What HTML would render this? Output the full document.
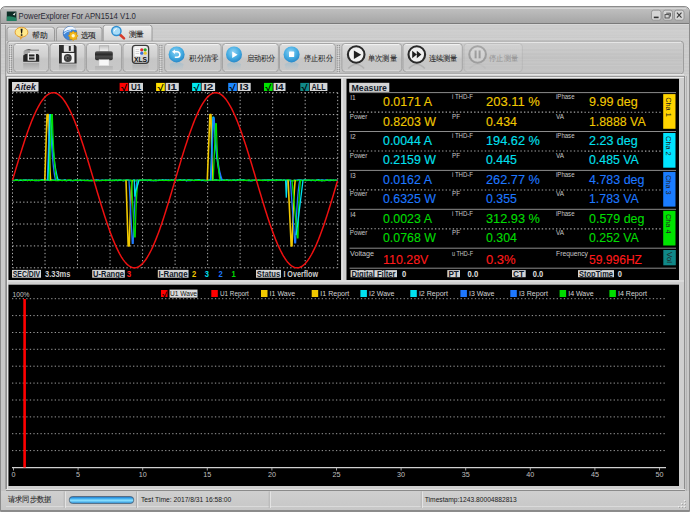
<!DOCTYPE html><html><head><meta charset="utf-8"><style>
html,body{margin:0;padding:0;background:#fff;width:690px;height:519px;overflow:hidden}
svg{display:block;font-family:"Liberation Sans", sans-serif}
</style></head><body>
<svg width="690" height="519" viewBox="0 0 690 519">
<defs>
<linearGradient id="gTitle" x1="0" y1="0" x2="0" y2="1">
<stop offset="0" stop-color="#c2c2c2"/><stop offset="1" stop-color="#a6a6a6"/></linearGradient>
<linearGradient id="gMetal" x1="0" y1="0" x2="0" y2="1">
<stop offset="0" stop-color="#d2d2d2"/><stop offset="1" stop-color="#c4c4c4"/></linearGradient>
<linearGradient id="gTool" x1="0" y1="0" x2="0" y2="1">
<stop offset="0" stop-color="#cfcfcf"/><stop offset="0.5" stop-color="#c4c4c4"/><stop offset="1" stop-color="#c9c9c9"/></linearGradient>
<linearGradient id="gBtn" x1="0" y1="0" x2="0" y2="1">
<stop offset="0" stop-color="#dedede"/><stop offset="0.45" stop-color="#d0d0d0"/><stop offset="0.55" stop-color="#c6c6c6"/><stop offset="1" stop-color="#c8c8c8"/></linearGradient>
<linearGradient id="gTab" x1="0" y1="0" x2="0" y2="1">
<stop offset="0" stop-color="#dcdcdc"/><stop offset="1" stop-color="#c2c2c2"/></linearGradient>
<linearGradient id="gTabA" x1="0" y1="0" x2="0" y2="1">
<stop offset="0" stop-color="#ececec"/><stop offset="1" stop-color="#d4d4d4"/></linearGradient>
<linearGradient id="gStatus" x1="0" y1="0" x2="0" y2="1">
<stop offset="0" stop-color="#cfcfcf"/><stop offset="1" stop-color="#c6c6c6"/></linearGradient>
<linearGradient id="gProg" x1="0" y1="0" x2="0" y2="1">
<stop offset="0" stop-color="#1c7ad0"/><stop offset="0.25" stop-color="#3aa8ec"/><stop offset="0.55" stop-color="#8ae0ff"/><stop offset="1" stop-color="#2c96e0"/></linearGradient>
<radialGradient id="gBlue" cx="0.45" cy="0.35" r="0.65">
<stop offset="0" stop-color="#8ed2f4"/><stop offset="0.6" stop-color="#44ace2"/><stop offset="1" stop-color="#2888c8"/></radialGradient>
<linearGradient id="gRefl" x1="0" y1="0" x2="0" y2="1">
<stop offset="0" stop-color="#000" stop-opacity="0.16"/><stop offset="1" stop-color="#000" stop-opacity="0"/></linearGradient>
<linearGradient id="gReflB" x1="0" y1="0" x2="0" y2="1">
<stop offset="0" stop-color="#3aa6e2" stop-opacity="0.35"/><stop offset="1" stop-color="#3aa6e2" stop-opacity="0"/></linearGradient>
</defs>

<path d="M0.5,511.5 L0.5,12 Q0.5,6.5 6,6.5 L684,6.5 Q689.5,6.5 689.5,12 L689.5,511.5 Z" fill="#c6c6c6" stroke="#8c8c8c" stroke-width="1"/>
<path d="M1,23 L1,12 Q1,7 6,7 L684,7 Q689,7 689,12 L689,23 Z" fill="url(#gTitle)"/>
<line x1="4" y1="8.5" x2="686" y2="8.5" stroke="#d6d6d6" stroke-width="1"/>
<line x1="1" y1="23.5" x2="689" y2="23.5" stroke="#7a7a7a" stroke-width="1"/>
<line x1="1" y1="24.5" x2="689" y2="24.5" stroke="#d8d8d8" stroke-width="1"/>
<rect x="6.8" y="11.5" width="9.6" height="9.4" fill="#0e2d26"/><path d="M6.8,16.5 Q10.5,15.5 16.4,17.8 L16.4,20.9 L6.8,20.9Z" fill="#208060"/><path d="M12.8,14.5 L15.8,12.2 L14.5,15.5 Z" fill="#f0f0f0"/>
<text x="18.6" y="19.2" font-size="9.2" fill="#2a2a36" textLength="117.3" lengthAdjust="spacingAndGlyphs">PowerExplorer For APN1514 V1.0</text>
<rect x="651.5" y="10.2" width="9.5" height="10" rx="2.2" fill="#d6d6d6" stroke="#8a8a8a" stroke-width="0.8"/>
<rect x="663" y="10.2" width="9.5" height="10" rx="2.2" fill="#d6d6d6" stroke="#8a8a8a" stroke-width="0.8"/>
<rect x="674.5" y="10.2" width="9.5" height="10" rx="2.2" fill="#d6d6d6" stroke="#8a8a8a" stroke-width="0.8"/>
<rect x="653.8" y="16.6" width="4.8" height="1.6" fill="#333"/>
<path d="M666.2,13.2 h4.2 v3.4" fill="none" stroke="#444" stroke-width="0.9"/><rect x="665" y="14.6" width="4.2" height="3.4" fill="#d6d6d6" stroke="#444" stroke-width="0.9"/>
<path d="M676.9,12.6 L681.5,17.6 M681.5,12.6 L676.9,17.6" stroke="#3a3a3a" stroke-width="1.1"/>
<rect x="1" y="25" width="688" height="486" fill="url(#gMetal)"/>
<line x1="1" y1="25.5" x2="689" y2="25.5" stroke="rgb(194,194,194)" stroke-opacity="0.4"/><line x1="1" y1="26.5" x2="689" y2="26.5" stroke="rgb(200,200,200)" stroke-opacity="0.4"/><line x1="1" y1="27.5" x2="689" y2="27.5" stroke="rgb(199,199,199)" stroke-opacity="0.4"/><line x1="1" y1="28.5" x2="689" y2="28.5" stroke="rgb(193,193,193)" stroke-opacity="0.4"/><line x1="1" y1="29.5" x2="689" y2="29.5" stroke="rgb(196,196,196)" stroke-opacity="0.4"/><line x1="1" y1="30.5" x2="689" y2="30.5" stroke="rgb(205,205,205)" stroke-opacity="0.4"/><line x1="1" y1="31.5" x2="689" y2="31.5" stroke="rgb(200,200,200)" stroke-opacity="0.4"/><line x1="1" y1="32.5" x2="689" y2="32.5" stroke="rgb(198,198,198)" stroke-opacity="0.4"/><line x1="1" y1="33.5" x2="689" y2="33.5" stroke="rgb(201,201,201)" stroke-opacity="0.4"/><line x1="1" y1="34.5" x2="689" y2="34.5" stroke="rgb(200,200,200)" stroke-opacity="0.4"/><line x1="1" y1="35.5" x2="689" y2="35.5" stroke="rgb(192,192,192)" stroke-opacity="0.4"/><line x1="1" y1="36.5" x2="689" y2="36.5" stroke="rgb(200,200,200)" stroke-opacity="0.4"/><line x1="1" y1="37.5" x2="689" y2="37.5" stroke="rgb(191,191,191)" stroke-opacity="0.4"/><line x1="1" y1="38.5" x2="689" y2="38.5" stroke="rgb(205,205,205)" stroke-opacity="0.4"/><line x1="1" y1="39.5" x2="689" y2="39.5" stroke="rgb(204,204,204)" stroke-opacity="0.4"/><line x1="1" y1="40.5" x2="689" y2="40.5" stroke="rgb(198,198,198)" stroke-opacity="0.4"/><line x1="1" y1="41.5" x2="689" y2="41.5" stroke="rgb(195,195,195)" stroke-opacity="0.4"/><line x1="1" y1="42.5" x2="689" y2="42.5" stroke="rgb(199,199,199)" stroke-opacity="0.4"/><line x1="1" y1="43.5" x2="689" y2="43.5" stroke="rgb(194,194,194)" stroke-opacity="0.4"/><line x1="1" y1="44.5" x2="689" y2="44.5" stroke="rgb(194,194,194)" stroke-opacity="0.4"/><line x1="1" y1="45.5" x2="689" y2="45.5" stroke="rgb(202,202,202)" stroke-opacity="0.4"/><line x1="1" y1="46.5" x2="689" y2="46.5" stroke="rgb(198,198,198)" stroke-opacity="0.4"/><line x1="1" y1="47.5" x2="689" y2="47.5" stroke="rgb(199,199,199)" stroke-opacity="0.4"/><line x1="1" y1="48.5" x2="689" y2="48.5" stroke="rgb(204,204,204)" stroke-opacity="0.4"/><line x1="1" y1="49.5" x2="689" y2="49.5" stroke="rgb(199,199,199)" stroke-opacity="0.4"/><line x1="1" y1="50.5" x2="689" y2="50.5" stroke="rgb(198,198,198)" stroke-opacity="0.4"/><line x1="1" y1="51.5" x2="689" y2="51.5" stroke="rgb(197,197,197)" stroke-opacity="0.4"/><line x1="1" y1="52.5" x2="689" y2="52.5" stroke="rgb(201,201,201)" stroke-opacity="0.4"/><line x1="1" y1="53.5" x2="689" y2="53.5" stroke="rgb(204,204,204)" stroke-opacity="0.4"/><line x1="1" y1="54.5" x2="689" y2="54.5" stroke="rgb(193,193,193)" stroke-opacity="0.4"/><line x1="1" y1="55.5" x2="689" y2="55.5" stroke="rgb(194,194,194)" stroke-opacity="0.4"/><line x1="1" y1="56.5" x2="689" y2="56.5" stroke="rgb(201,201,201)" stroke-opacity="0.4"/><line x1="1" y1="57.5" x2="689" y2="57.5" stroke="rgb(193,193,193)" stroke-opacity="0.4"/><line x1="1" y1="58.5" x2="689" y2="58.5" stroke="rgb(204,204,204)" stroke-opacity="0.4"/><line x1="1" y1="59.5" x2="689" y2="59.5" stroke="rgb(205,205,205)" stroke-opacity="0.4"/><line x1="1" y1="60.5" x2="689" y2="60.5" stroke="rgb(199,199,199)" stroke-opacity="0.4"/><line x1="1" y1="61.5" x2="689" y2="61.5" stroke="rgb(197,197,197)" stroke-opacity="0.4"/><line x1="1" y1="62.5" x2="689" y2="62.5" stroke="rgb(202,202,202)" stroke-opacity="0.4"/><line x1="1" y1="63.5" x2="689" y2="63.5" stroke="rgb(191,191,191)" stroke-opacity="0.4"/><line x1="1" y1="64.5" x2="689" y2="64.5" stroke="rgb(201,201,201)" stroke-opacity="0.4"/><line x1="1" y1="65.5" x2="689" y2="65.5" stroke="rgb(203,203,203)" stroke-opacity="0.4"/><line x1="1" y1="66.5" x2="689" y2="66.5" stroke="rgb(192,192,192)" stroke-opacity="0.4"/><line x1="1" y1="67.5" x2="689" y2="67.5" stroke="rgb(193,193,193)" stroke-opacity="0.4"/><line x1="1" y1="68.5" x2="689" y2="68.5" stroke="rgb(203,203,203)" stroke-opacity="0.4"/><line x1="1" y1="69.5" x2="689" y2="69.5" stroke="rgb(200,200,200)" stroke-opacity="0.4"/><line x1="1" y1="70.5" x2="689" y2="70.5" stroke="rgb(191,191,191)" stroke-opacity="0.4"/><line x1="1" y1="71.5" x2="689" y2="71.5" stroke="rgb(195,195,195)" stroke-opacity="0.4"/><line x1="1" y1="72.5" x2="689" y2="72.5" stroke="rgb(203,203,203)" stroke-opacity="0.4"/><line x1="1" y1="73.5" x2="689" y2="73.5" stroke="rgb(191,191,191)" stroke-opacity="0.4"/><line x1="1" y1="74.5" x2="689" y2="74.5" stroke="rgb(204,204,204)" stroke-opacity="0.4"/>
<line x1="5.5" y1="25" x2="5.5" y2="489" stroke="#a0a0a0" stroke-width="1"/>
<line x1="686.5" y1="76" x2="686.5" y2="511" stroke="#b4b4b4" stroke-width="1"/>
<path d="M7,41 L7,29.7 Q7,27.2 9.5,27.2 L52.0,27.2 Q54.5,27.2 54.5,29.7 L54.5,41" fill="url(#gTab)" stroke="#8c8c8c" stroke-width="0.8"/>
<line x1="9" y1="28.2" x2="52.5" y2="28.2" stroke="#f4f4f4" stroke-width="0.8"/>
<path d="M56.4,41 L56.4,29.7 Q56.4,27.2 58.9,27.2 L99.5,27.2 Q102,27.2 102,29.7 L102,41" fill="url(#gTab)" stroke="#8c8c8c" stroke-width="0.8"/>
<line x1="58.4" y1="28.2" x2="100" y2="28.2" stroke="#f4f4f4" stroke-width="0.8"/>
<path d="M103.2,41 L103.2,27.7 Q103.2,25.2 105.7,25.2 L149.5,25.2 Q152,25.2 152,27.7 L152,41" fill="url(#gTabA)" stroke="#8c8c8c" stroke-width="0.8"/>
<line x1="105.2" y1="26.2" x2="150" y2="26.2" stroke="#f4f4f4" stroke-width="0.8"/>
<ellipse cx="21.5" cy="32.2" rx="6.4" ry="4.9" fill="#ffe88a" stroke="#e2a038" stroke-width="1"/><path d="M19.5,36.5 L20.5,40 L23,36.8Z" fill="#e2a038"/><path d="M20.6,28.8 L22.6,28.8 L22.1,33.6 L21.1,33.6Z" fill="#111"/><rect x="20.8" y="34.3" width="1.6" height="1.5" fill="#111"/>
<text x="31.8" y="38" font-size="8.2" fill="#1a1a1a" textLength="15.6" lengthAdjust="spacingAndGlyphs" stroke="#1a1a1a" stroke-width="0.08">帮助</text>
<circle cx="70" cy="33.3" r="6.8" fill="#3f86d8" stroke="#2a5ea8" stroke-width="0.6"/><path d="M63.6,32 Q65,26.8 70.5,26.6 Q74.5,27 76,30 Q70,28.5 63.6,32Z" fill="#f2f8ff"/><path d="M64,34 Q66,31 71,30.5" stroke="#bfe0ff" stroke-width="1.2" fill="none"/><polygon points="78.10,35.80 76.53,37.18 76.66,39.26 74.58,39.13 73.20,40.70 71.82,39.13 69.74,39.26 69.87,37.18 68.30,35.80 69.87,34.42 69.74,32.34 71.82,32.47 73.20,30.90 74.58,32.47 76.66,32.34 76.53,34.42" fill="#f4b818" stroke="#d08a00" stroke-width="0.6"/><circle cx="73.2" cy="35.8" r="1.7" fill="#fff8d0"/>
<text x="80.5" y="38" font-size="8.2" fill="#1a1a1a" textLength="15.6" lengthAdjust="spacingAndGlyphs" stroke="#1a1a1a" stroke-width="0.08">选项</text>
<path d="M119.6,34.2 L124,38.4" stroke="#d83a28" stroke-width="2.6" stroke-linecap="round"/><circle cx="116.4" cy="31" r="4.6" fill="#a8dcf8" stroke="#2f8ed0" stroke-width="1.5"/><path d="M114,31.5 Q114.2,29 116.8,28.6" fill="none" stroke="#ffffff" stroke-width="1"/>
<text x="128.5" y="37.4" font-size="8.2" fill="#1a1a1a" textLength="15.6" lengthAdjust="spacingAndGlyphs" stroke="#1a1a1a" stroke-width="0.08">测量</text>
<rect x="7" y="41.2" width="676.5" height="32.6" rx="3" fill="url(#gTool)" stroke="#999999" stroke-width="0.9"/>
<line x1="9" y1="43.5" x2="682" y2="43.5" stroke="rgb(201,201,201)" stroke-opacity="0.35"/><line x1="9" y1="44.5" x2="682" y2="44.5" stroke="rgb(204,204,204)" stroke-opacity="0.35"/><line x1="9" y1="45.5" x2="682" y2="45.5" stroke="rgb(201,201,201)" stroke-opacity="0.35"/><line x1="9" y1="46.5" x2="682" y2="46.5" stroke="rgb(201,201,201)" stroke-opacity="0.35"/><line x1="9" y1="47.5" x2="682" y2="47.5" stroke="rgb(203,203,203)" stroke-opacity="0.35"/><line x1="9" y1="48.5" x2="682" y2="48.5" stroke="rgb(205,205,205)" stroke-opacity="0.35"/><line x1="9" y1="49.5" x2="682" y2="49.5" stroke="rgb(193,193,193)" stroke-opacity="0.35"/><line x1="9" y1="50.5" x2="682" y2="50.5" stroke="rgb(192,192,192)" stroke-opacity="0.35"/><line x1="9" y1="51.5" x2="682" y2="51.5" stroke="rgb(203,203,203)" stroke-opacity="0.35"/><line x1="9" y1="52.5" x2="682" y2="52.5" stroke="rgb(202,202,202)" stroke-opacity="0.35"/><line x1="9" y1="53.5" x2="682" y2="53.5" stroke="rgb(192,192,192)" stroke-opacity="0.35"/><line x1="9" y1="54.5" x2="682" y2="54.5" stroke="rgb(190,190,190)" stroke-opacity="0.35"/><line x1="9" y1="55.5" x2="682" y2="55.5" stroke="rgb(201,201,201)" stroke-opacity="0.35"/><line x1="9" y1="56.5" x2="682" y2="56.5" stroke="rgb(196,196,196)" stroke-opacity="0.35"/><line x1="9" y1="57.5" x2="682" y2="57.5" stroke="rgb(191,191,191)" stroke-opacity="0.35"/><line x1="9" y1="58.5" x2="682" y2="58.5" stroke="rgb(189,189,189)" stroke-opacity="0.35"/><line x1="9" y1="59.5" x2="682" y2="59.5" stroke="rgb(204,204,204)" stroke-opacity="0.35"/><line x1="9" y1="60.5" x2="682" y2="60.5" stroke="rgb(188,188,188)" stroke-opacity="0.35"/><line x1="9" y1="61.5" x2="682" y2="61.5" stroke="rgb(199,199,199)" stroke-opacity="0.35"/><line x1="9" y1="62.5" x2="682" y2="62.5" stroke="rgb(201,201,201)" stroke-opacity="0.35"/><line x1="9" y1="63.5" x2="682" y2="63.5" stroke="rgb(192,192,192)" stroke-opacity="0.35"/><line x1="9" y1="64.5" x2="682" y2="64.5" stroke="rgb(187,187,187)" stroke-opacity="0.35"/><line x1="9" y1="65.5" x2="682" y2="65.5" stroke="rgb(203,203,203)" stroke-opacity="0.35"/><line x1="9" y1="66.5" x2="682" y2="66.5" stroke="rgb(189,189,189)" stroke-opacity="0.35"/><line x1="9" y1="67.5" x2="682" y2="67.5" stroke="rgb(188,188,188)" stroke-opacity="0.35"/><line x1="9" y1="68.5" x2="682" y2="68.5" stroke="rgb(188,188,188)" stroke-opacity="0.35"/><line x1="9" y1="69.5" x2="682" y2="69.5" stroke="rgb(193,193,193)" stroke-opacity="0.35"/><line x1="9" y1="70.5" x2="682" y2="70.5" stroke="rgb(194,194,194)" stroke-opacity="0.35"/><line x1="9" y1="71.5" x2="682" y2="71.5" stroke="rgb(187,187,187)" stroke-opacity="0.35"/><line x1="9" y1="72.5" x2="682" y2="72.5" stroke="rgb(201,201,201)" stroke-opacity="0.35"/>
<line x1="9" y1="42.3" x2="681" y2="42.3" stroke="#ececec" stroke-width="1"/>
<line x1="9" y1="72.8" x2="681" y2="72.8" stroke="#b8b8b8" stroke-width="0.8"/>
<line x1="7" y1="74.6" x2="684" y2="74.6" stroke="#e6e6e6" stroke-width="1.2"/>
<rect x="9" y="45.00" width="1.1" height="1" fill="#8c8c8c"/><rect x="11" y="45.00" width="1.1" height="1" fill="#8c8c8c"/><rect x="9.9" y="45.90" width="1" height="0.9" fill="#eeeeee"/><rect x="9" y="46.85" width="1.1" height="1" fill="#8c8c8c"/><rect x="11" y="46.85" width="1.1" height="1" fill="#8c8c8c"/><rect x="9.9" y="47.75" width="1" height="0.9" fill="#eeeeee"/><rect x="9" y="48.70" width="1.1" height="1" fill="#8c8c8c"/><rect x="11" y="48.70" width="1.1" height="1" fill="#8c8c8c"/><rect x="9.9" y="49.60" width="1" height="0.9" fill="#eeeeee"/><rect x="9" y="50.55" width="1.1" height="1" fill="#8c8c8c"/><rect x="11" y="50.55" width="1.1" height="1" fill="#8c8c8c"/><rect x="9.9" y="51.45" width="1" height="0.9" fill="#eeeeee"/><rect x="9" y="52.40" width="1.1" height="1" fill="#8c8c8c"/><rect x="11" y="52.40" width="1.1" height="1" fill="#8c8c8c"/><rect x="9.9" y="53.30" width="1" height="0.9" fill="#eeeeee"/><rect x="9" y="54.25" width="1.1" height="1" fill="#8c8c8c"/><rect x="11" y="54.25" width="1.1" height="1" fill="#8c8c8c"/><rect x="9.9" y="55.15" width="1" height="0.9" fill="#eeeeee"/><rect x="9" y="56.10" width="1.1" height="1" fill="#8c8c8c"/><rect x="11" y="56.10" width="1.1" height="1" fill="#8c8c8c"/><rect x="9.9" y="57.00" width="1" height="0.9" fill="#eeeeee"/><rect x="9" y="57.95" width="1.1" height="1" fill="#8c8c8c"/><rect x="11" y="57.95" width="1.1" height="1" fill="#8c8c8c"/><rect x="9.9" y="58.85" width="1" height="0.9" fill="#eeeeee"/><rect x="9" y="59.80" width="1.1" height="1" fill="#8c8c8c"/><rect x="11" y="59.80" width="1.1" height="1" fill="#8c8c8c"/><rect x="9.9" y="60.70" width="1" height="0.9" fill="#eeeeee"/><rect x="9" y="61.65" width="1.1" height="1" fill="#8c8c8c"/><rect x="11" y="61.65" width="1.1" height="1" fill="#8c8c8c"/><rect x="9.9" y="62.55" width="1" height="0.9" fill="#eeeeee"/><rect x="9" y="63.50" width="1.1" height="1" fill="#8c8c8c"/><rect x="11" y="63.50" width="1.1" height="1" fill="#8c8c8c"/><rect x="9.9" y="64.40" width="1" height="0.9" fill="#eeeeee"/><rect x="9" y="65.35" width="1.1" height="1" fill="#8c8c8c"/><rect x="11" y="65.35" width="1.1" height="1" fill="#8c8c8c"/><rect x="9.9" y="66.25" width="1" height="0.9" fill="#eeeeee"/><rect x="9" y="67.20" width="1.1" height="1" fill="#8c8c8c"/><rect x="11" y="67.20" width="1.1" height="1" fill="#8c8c8c"/><rect x="9.9" y="68.10" width="1" height="0.9" fill="#eeeeee"/><rect x="9" y="69.05" width="1.1" height="1" fill="#8c8c8c"/><rect x="11" y="69.05" width="1.1" height="1" fill="#8c8c8c"/><rect x="9.9" y="69.95" width="1" height="0.9" fill="#eeeeee"/><rect x="9" y="70.90" width="1.1" height="1" fill="#8c8c8c"/><rect x="11" y="70.90" width="1.1" height="1" fill="#8c8c8c"/><rect x="9.9" y="71.80" width="1" height="0.9" fill="#eeeeee"/>
<rect x="159.3" y="45.00" width="1.1" height="1" fill="#8c8c8c"/><rect x="161.3" y="45.00" width="1.1" height="1" fill="#8c8c8c"/><rect x="160.20000000000002" y="45.90" width="1" height="0.9" fill="#eeeeee"/><rect x="159.3" y="46.85" width="1.1" height="1" fill="#8c8c8c"/><rect x="161.3" y="46.85" width="1.1" height="1" fill="#8c8c8c"/><rect x="160.20000000000002" y="47.75" width="1" height="0.9" fill="#eeeeee"/><rect x="159.3" y="48.70" width="1.1" height="1" fill="#8c8c8c"/><rect x="161.3" y="48.70" width="1.1" height="1" fill="#8c8c8c"/><rect x="160.20000000000002" y="49.60" width="1" height="0.9" fill="#eeeeee"/><rect x="159.3" y="50.55" width="1.1" height="1" fill="#8c8c8c"/><rect x="161.3" y="50.55" width="1.1" height="1" fill="#8c8c8c"/><rect x="160.20000000000002" y="51.45" width="1" height="0.9" fill="#eeeeee"/><rect x="159.3" y="52.40" width="1.1" height="1" fill="#8c8c8c"/><rect x="161.3" y="52.40" width="1.1" height="1" fill="#8c8c8c"/><rect x="160.20000000000002" y="53.30" width="1" height="0.9" fill="#eeeeee"/><rect x="159.3" y="54.25" width="1.1" height="1" fill="#8c8c8c"/><rect x="161.3" y="54.25" width="1.1" height="1" fill="#8c8c8c"/><rect x="160.20000000000002" y="55.15" width="1" height="0.9" fill="#eeeeee"/><rect x="159.3" y="56.10" width="1.1" height="1" fill="#8c8c8c"/><rect x="161.3" y="56.10" width="1.1" height="1" fill="#8c8c8c"/><rect x="160.20000000000002" y="57.00" width="1" height="0.9" fill="#eeeeee"/><rect x="159.3" y="57.95" width="1.1" height="1" fill="#8c8c8c"/><rect x="161.3" y="57.95" width="1.1" height="1" fill="#8c8c8c"/><rect x="160.20000000000002" y="58.85" width="1" height="0.9" fill="#eeeeee"/><rect x="159.3" y="59.80" width="1.1" height="1" fill="#8c8c8c"/><rect x="161.3" y="59.80" width="1.1" height="1" fill="#8c8c8c"/><rect x="160.20000000000002" y="60.70" width="1" height="0.9" fill="#eeeeee"/><rect x="159.3" y="61.65" width="1.1" height="1" fill="#8c8c8c"/><rect x="161.3" y="61.65" width="1.1" height="1" fill="#8c8c8c"/><rect x="160.20000000000002" y="62.55" width="1" height="0.9" fill="#eeeeee"/><rect x="159.3" y="63.50" width="1.1" height="1" fill="#8c8c8c"/><rect x="161.3" y="63.50" width="1.1" height="1" fill="#8c8c8c"/><rect x="160.20000000000002" y="64.40" width="1" height="0.9" fill="#eeeeee"/><rect x="159.3" y="65.35" width="1.1" height="1" fill="#8c8c8c"/><rect x="161.3" y="65.35" width="1.1" height="1" fill="#8c8c8c"/><rect x="160.20000000000002" y="66.25" width="1" height="0.9" fill="#eeeeee"/><rect x="159.3" y="67.20" width="1.1" height="1" fill="#8c8c8c"/><rect x="161.3" y="67.20" width="1.1" height="1" fill="#8c8c8c"/><rect x="160.20000000000002" y="68.10" width="1" height="0.9" fill="#eeeeee"/><rect x="159.3" y="69.05" width="1.1" height="1" fill="#8c8c8c"/><rect x="161.3" y="69.05" width="1.1" height="1" fill="#8c8c8c"/><rect x="160.20000000000002" y="69.95" width="1" height="0.9" fill="#eeeeee"/><rect x="159.3" y="70.90" width="1.1" height="1" fill="#8c8c8c"/><rect x="161.3" y="70.90" width="1.1" height="1" fill="#8c8c8c"/><rect x="160.20000000000002" y="71.80" width="1" height="0.9" fill="#eeeeee"/>
<rect x="336.8" y="45.00" width="1.1" height="1" fill="#8c8c8c"/><rect x="338.8" y="45.00" width="1.1" height="1" fill="#8c8c8c"/><rect x="337.7" y="45.90" width="1" height="0.9" fill="#eeeeee"/><rect x="336.8" y="46.85" width="1.1" height="1" fill="#8c8c8c"/><rect x="338.8" y="46.85" width="1.1" height="1" fill="#8c8c8c"/><rect x="337.7" y="47.75" width="1" height="0.9" fill="#eeeeee"/><rect x="336.8" y="48.70" width="1.1" height="1" fill="#8c8c8c"/><rect x="338.8" y="48.70" width="1.1" height="1" fill="#8c8c8c"/><rect x="337.7" y="49.60" width="1" height="0.9" fill="#eeeeee"/><rect x="336.8" y="50.55" width="1.1" height="1" fill="#8c8c8c"/><rect x="338.8" y="50.55" width="1.1" height="1" fill="#8c8c8c"/><rect x="337.7" y="51.45" width="1" height="0.9" fill="#eeeeee"/><rect x="336.8" y="52.40" width="1.1" height="1" fill="#8c8c8c"/><rect x="338.8" y="52.40" width="1.1" height="1" fill="#8c8c8c"/><rect x="337.7" y="53.30" width="1" height="0.9" fill="#eeeeee"/><rect x="336.8" y="54.25" width="1.1" height="1" fill="#8c8c8c"/><rect x="338.8" y="54.25" width="1.1" height="1" fill="#8c8c8c"/><rect x="337.7" y="55.15" width="1" height="0.9" fill="#eeeeee"/><rect x="336.8" y="56.10" width="1.1" height="1" fill="#8c8c8c"/><rect x="338.8" y="56.10" width="1.1" height="1" fill="#8c8c8c"/><rect x="337.7" y="57.00" width="1" height="0.9" fill="#eeeeee"/><rect x="336.8" y="57.95" width="1.1" height="1" fill="#8c8c8c"/><rect x="338.8" y="57.95" width="1.1" height="1" fill="#8c8c8c"/><rect x="337.7" y="58.85" width="1" height="0.9" fill="#eeeeee"/><rect x="336.8" y="59.80" width="1.1" height="1" fill="#8c8c8c"/><rect x="338.8" y="59.80" width="1.1" height="1" fill="#8c8c8c"/><rect x="337.7" y="60.70" width="1" height="0.9" fill="#eeeeee"/><rect x="336.8" y="61.65" width="1.1" height="1" fill="#8c8c8c"/><rect x="338.8" y="61.65" width="1.1" height="1" fill="#8c8c8c"/><rect x="337.7" y="62.55" width="1" height="0.9" fill="#eeeeee"/><rect x="336.8" y="63.50" width="1.1" height="1" fill="#8c8c8c"/><rect x="338.8" y="63.50" width="1.1" height="1" fill="#8c8c8c"/><rect x="337.7" y="64.40" width="1" height="0.9" fill="#eeeeee"/><rect x="336.8" y="65.35" width="1.1" height="1" fill="#8c8c8c"/><rect x="338.8" y="65.35" width="1.1" height="1" fill="#8c8c8c"/><rect x="337.7" y="66.25" width="1" height="0.9" fill="#eeeeee"/><rect x="336.8" y="67.20" width="1.1" height="1" fill="#8c8c8c"/><rect x="338.8" y="67.20" width="1.1" height="1" fill="#8c8c8c"/><rect x="337.7" y="68.10" width="1" height="0.9" fill="#eeeeee"/><rect x="336.8" y="69.05" width="1.1" height="1" fill="#8c8c8c"/><rect x="338.8" y="69.05" width="1.1" height="1" fill="#8c8c8c"/><rect x="337.7" y="69.95" width="1" height="0.9" fill="#eeeeee"/><rect x="336.8" y="70.90" width="1.1" height="1" fill="#8c8c8c"/><rect x="338.8" y="70.90" width="1.1" height="1" fill="#8c8c8c"/><rect x="337.7" y="71.80" width="1" height="0.9" fill="#eeeeee"/>
<g><rect x="13.5" y="43.5" width="35.0" height="28.3" rx="3.2" fill="url(#gBtn)" stroke="#a0a0a0" stroke-width="0.9"/>
<line x1="16.0" y1="44.6" x2="46.0" y2="44.6" stroke="#f2f2f2" stroke-width="1"/>
<line x1="16.0" y1="70.8" x2="46.0" y2="70.8" stroke="#e0e0e0" stroke-width="0.8"/></g>
<g><rect x="50" y="43.5" width="35.0" height="28.3" rx="3.2" fill="url(#gBtn)" stroke="#a0a0a0" stroke-width="0.9"/>
<line x1="52.5" y1="44.6" x2="82.5" y2="44.6" stroke="#f2f2f2" stroke-width="1"/>
<line x1="52.5" y1="70.8" x2="82.5" y2="70.8" stroke="#e0e0e0" stroke-width="0.8"/></g>
<g><rect x="86.5" y="43.5" width="35.0" height="28.3" rx="3.2" fill="url(#gBtn)" stroke="#a0a0a0" stroke-width="0.9"/>
<line x1="89.0" y1="44.6" x2="119.0" y2="44.6" stroke="#f2f2f2" stroke-width="1"/>
<line x1="89.0" y1="70.8" x2="119.0" y2="70.8" stroke="#e0e0e0" stroke-width="0.8"/></g>
<g><rect x="123" y="43.5" width="35.0" height="28.3" rx="3.2" fill="url(#gBtn)" stroke="#a0a0a0" stroke-width="0.9"/>
<line x1="125.5" y1="44.6" x2="155.5" y2="44.6" stroke="#f2f2f2" stroke-width="1"/>
<line x1="125.5" y1="70.8" x2="155.5" y2="70.8" stroke="#e0e0e0" stroke-width="0.8"/></g>
<g><rect x="164.6" y="43.5" width="56.5" height="28.3" rx="3.2" fill="url(#gBtn)" stroke="#a0a0a0" stroke-width="0.9"/>
<line x1="167.1" y1="44.6" x2="218.6" y2="44.6" stroke="#f2f2f2" stroke-width="1"/>
<line x1="167.1" y1="70.8" x2="218.6" y2="70.8" stroke="#e0e0e0" stroke-width="0.8"/></g>
<g><rect x="222.5" y="43.5" width="55.9" height="28.3" rx="3.2" fill="url(#gBtn)" stroke="#a0a0a0" stroke-width="0.9"/>
<line x1="225.0" y1="44.6" x2="275.9" y2="44.6" stroke="#f2f2f2" stroke-width="1"/>
<line x1="225.0" y1="70.8" x2="275.9" y2="70.8" stroke="#e0e0e0" stroke-width="0.8"/></g>
<g><rect x="279.5" y="43.5" width="55.9" height="28.3" rx="3.2" fill="url(#gBtn)" stroke="#a0a0a0" stroke-width="0.9"/>
<line x1="282.0" y1="44.6" x2="332.9" y2="44.6" stroke="#f2f2f2" stroke-width="1"/>
<line x1="282.0" y1="70.8" x2="332.9" y2="70.8" stroke="#e0e0e0" stroke-width="0.8"/></g>
<g><rect x="341.9" y="43.5" width="59.8" height="28.3" rx="3.2" fill="url(#gBtn)" stroke="#a0a0a0" stroke-width="0.9"/>
<line x1="344.4" y1="44.6" x2="399.2" y2="44.6" stroke="#f2f2f2" stroke-width="1"/>
<line x1="344.4" y1="70.8" x2="399.2" y2="70.8" stroke="#e0e0e0" stroke-width="0.8"/></g>
<g><rect x="403" y="43.5" width="59.3" height="28.3" rx="3.2" fill="url(#gBtn)" stroke="#a0a0a0" stroke-width="0.9"/>
<line x1="405.5" y1="44.6" x2="459.8" y2="44.6" stroke="#f2f2f2" stroke-width="1"/>
<line x1="405.5" y1="70.8" x2="459.8" y2="70.8" stroke="#e0e0e0" stroke-width="0.8"/></g>
<g opacity="0.35"><rect x="464" y="43.5" width="58.3" height="28.3" rx="3.2" fill="url(#gBtn)" stroke="#a0a0a0" stroke-width="0.9"/>
<line x1="466.5" y1="44.6" x2="519.8" y2="44.6" stroke="#f2f2f2" stroke-width="1"/>
<line x1="466.5" y1="70.8" x2="519.8" y2="70.8" stroke="#e0e0e0" stroke-width="0.8"/></g>
<path d="M24.2,50.2 L29,49 L31.5,49.8 L39,49.8 L39,50.6 L24.2,50.6Z" fill="#555"/>
<path d="M23.6,51 L30,51 L30,54 L23.6,55.5Z" fill="#9a9a9a" opacity="0.8"/>
<path d="M23.2,55.5 L25.5,54 L27.6,54 L27.6,53 L35.9,53 L35.9,54 L38,54 L39.2,55.5 L39.2,61.8 L23.2,61.8Z" fill="#262626"/>
<rect x="27.6" y="53" width="8.3" height="7.7" fill="#eeeeee"/><rect x="29" y="54.4" width="5.5" height="2.1" fill="#262626"/><rect x="29" y="57.4" width="5.5" height="2.1" fill="#262626"/>
<rect x="23.2" y="63" width="16" height="7" fill="url(#gRefl)"/>
<path d="M59,45.1 L75,45.1 L76.6,46.7 L76.6,63.5 L59,63.5Z" fill="#2e2e2e"/>
<rect x="63.8" y="45.1" width="10" height="6.7" fill="#e6e6e6"/><rect x="68.8" y="46" width="2" height="4.9" fill="#2e2e2e"/>
<rect x="61.8" y="53" width="12.6" height="9.7" fill="#f2f2f2"/>
<circle cx="67.8" cy="58" r="3.9" fill="#3c3c3c"/><circle cx="67.2" cy="57.4" r="2" fill="#6a6a6a"/><circle cx="67.8" cy="58" r="0.9" fill="#222"/>
<rect x="59" y="64.5" width="17.6" height="7" fill="url(#gRefl)"/>
<linearGradient id="gPaper" x1="0" y1="0" x2="0" y2="1"><stop offset="0" stop-color="#c4c4c4"/><stop offset="1" stop-color="#f6f6f6"/></linearGradient>
<linearGradient id="gPBody" x1="0" y1="0" x2="0" y2="1"><stop offset="0" stop-color="#5a5a5a"/><stop offset="0.35" stop-color="#2a2a2a"/><stop offset="0.6" stop-color="#4a4a4a"/><stop offset="1" stop-color="#2e2e2e"/></linearGradient>
<rect x="99.2" y="45.8" width="9.6" height="6" fill="url(#gPaper)" stroke="#9a9a9a" stroke-width="0.5"/>
<rect x="95" y="51.2" width="17.8" height="9" rx="1.8" fill="url(#gPBody)"/>
<rect x="99" y="59.6" width="10" height="6.2" fill="#f8f8f8" stroke="#c8c8c8" stroke-width="0.4"/>
<rect x="95" y="66" width="17.8" height="6" fill="url(#gRefl)" opacity="0.6"/>
<linearGradient id="gXls" x1="0" y1="0" x2="0" y2="1"><stop offset="0" stop-color="#f0f0f0"/><stop offset="1" stop-color="#c8c8c8"/></linearGradient>
<rect x="132.4" y="45.3" width="16.2" height="18" rx="3" fill="url(#gXls)" stroke="#3a3a3a" stroke-width="1.3"/>
<rect x="134.8" y="47.6" width="5.4" height="8.4" fill="#fafafa"/><rect x="135.6" y="49" width="3.6" height="0.6" fill="#bbb"/><rect x="135.6" y="51" width="3.6" height="0.6" fill="#bbb"/><rect x="135.6" y="53" width="3.6" height="0.6" fill="#bbb"/>
<circle cx="141.8" cy="49.8" r="1.6" fill="#e02a2a"/><circle cx="145.2" cy="49.8" r="1.6" fill="#2aa82a"/><circle cx="141.8" cy="53.2" r="1.6" fill="#3a70d8"/><circle cx="145.2" cy="53.2" r="1.6" fill="#e8c830"/>
<text x="134" y="62.2" font-size="6.6" fill="#111111" font-weight="bold" textLength="13" lengthAdjust="spacingAndGlyphs">XLS</text>
<rect x="132.4" y="64.5" width="16.2" height="6" fill="url(#gRefl)" opacity="0.6"/>
<circle cx="176.6" cy="54.4" r="8" fill="url(#gBlue)"/>
<path d="M169.6,64 Q176.6,60 183.6,64 L182.6,70 L170.6,70Z" fill="url(#gReflB)" opacity="0.6"/>
<path d="M174.2,51.8 L177.2,51.8 A2.7,2.7 0 0 1 177.2,57.2 L174.79999999999998,57.2" fill="none" stroke="#fff" stroke-width="1.6"/><path d="M172.0,51.8 L175.0,49.6 L175.0,54Z" fill="#fff"/>
<circle cx="234" cy="54.4" r="8" fill="url(#gBlue)"/>
<path d="M227,64 Q234,60 241,64 L240,70 L228,70Z" fill="url(#gReflB)" opacity="0.6"/>
<path d="M232.2,51.4 L237.6,54.7 L232.2,58Z" fill="#fff"/>
<circle cx="291.6" cy="54.4" r="8" fill="url(#gBlue)"/>
<path d="M284.6,64 Q291.6,60 298.6,64 L297.6,70 L285.6,70Z" fill="url(#gReflB)" opacity="0.6"/>
<rect x="289.0" y="51.6" width="5.2" height="5.4" rx="0.6" fill="#fff"/>
<text x="189.2" y="61" font-size="8" fill="#262626" textLength="29.4" lengthAdjust="spacingAndGlyphs" stroke="#202020" stroke-width="0.06">积分清零</text>
<text x="246.7" y="61" font-size="8" fill="#262626" textLength="28.8" lengthAdjust="spacingAndGlyphs" stroke="#202020" stroke-width="0.06">启动积分</text>
<text x="303.8" y="61" font-size="8" fill="#262626" textLength="29" lengthAdjust="spacingAndGlyphs" stroke="#202020" stroke-width="0.06">停止积分</text>
<g opacity="1"><circle cx="356.2" cy="54.5" r="8.3" fill="#f0f0f0" stroke="#2a2a2a" stroke-width="2.1"/>
<path d="M348.2,68.5 Q356.2,60 364.2,68.5" fill="none" stroke="#333" stroke-width="1.6" opacity="0.15"/>
<path d="M353.9,50.4 L361.2,54.7 L353.9,59Z" fill="#1e1e1e"/>
</g>
<g opacity="1"><circle cx="416.8" cy="54.5" r="8.3" fill="#f0f0f0" stroke="#2a2a2a" stroke-width="2.1"/>
<path d="M408.8,68.5 Q416.8,60 424.8,68.5" fill="none" stroke="#333" stroke-width="1.6" opacity="0.15"/>
<path d="M412.2,50.8 L416.8,54.5 L412.2,58.2Z M416.8,50.8 L421.40000000000003,54.5 L416.8,58.2Z" fill="#1e1e1e"/>
</g>
<g opacity="0.25"><circle cx="477.6" cy="54.5" r="8.3" fill="#f0f0f0" stroke="#2a2a2a" stroke-width="2.1"/>
<path d="M469.6,68.5 Q477.6,60 485.6,68.5" fill="none" stroke="#333" stroke-width="1.6" opacity="0.15"/>
<rect x="474.6" y="50.5" width="2" height="7.8" fill="#1e1e1e"/><rect x="478.6" y="50.5" width="2" height="7.8" fill="#1e1e1e"/>
</g>
<text x="367.8" y="61.2" font-size="8" fill="#262626" textLength="29" lengthAdjust="spacingAndGlyphs" stroke="#202020" stroke-width="0.06">单次测量</text>
<text x="428.5" y="61.2" font-size="8" fill="#262626" textLength="29" lengthAdjust="spacingAndGlyphs" stroke="#202020" stroke-width="0.06">连续测量</text>
<text x="489.2" y="61.2" font-size="8" fill="#262626" textLength="29" lengthAdjust="spacingAndGlyphs" stroke="#202020" stroke-width="0.06" opacity="0.3">停止测量</text>
<rect x="6" y="75.5" width="679" height="414.5" fill="#cfcfcf"/>
<line x1="6.5" y1="76" x2="6.5" y2="490" stroke="#8e8e8e" stroke-width="1"/>
<line x1="7.5" y1="77" x2="7.5" y2="489" stroke="#e8e8e8" stroke-width="1"/>
<line x1="7" y1="76.5" x2="684" y2="76.5" stroke="#8e8e8e" stroke-width="0.8"/>
<line x1="7" y1="77.5" x2="684" y2="77.5" stroke="#ececec" stroke-width="1"/>
<line x1="8" y1="281" x2="684" y2="281" stroke="#e6e6e6" stroke-width="1"/>
<line x1="342.3" y1="78" x2="342.3" y2="280" stroke="#e6e6e6" stroke-width="1"/>
<line x1="684.5" y1="76" x2="684.5" y2="490" stroke="#8e8e8e" stroke-width="1"/>
<line x1="6" y1="489.6" x2="685" y2="489.6" stroke="#e6e6e6" stroke-width="1"/>
<line x1="6" y1="490.5" x2="685" y2="490.5" stroke="#8a8a8a" stroke-width="1"/>
<rect x="8.5" y="78.8" width="332.5" height="201.2" fill="#000"/>
<rect x="346.5" y="78.8" width="332.5" height="201.2" fill="#000"/>
<rect x="8.5" y="284.7" width="670.5" height="201.3" fill="#000"/>
<g stroke="#b4b4b4" stroke-width="1" stroke-dasharray="1.3 2.26"><line x1="12.50" y1="92.7" x2="12.50" y2="267.8"/><line x1="45.02" y1="92.7" x2="45.02" y2="267.8"/><line x1="77.54" y1="92.7" x2="77.54" y2="267.8"/><line x1="110.06" y1="92.7" x2="110.06" y2="267.8"/><line x1="142.58" y1="92.7" x2="142.58" y2="267.8"/><line x1="175.10" y1="92.7" x2="175.10" y2="267.8"/><line x1="207.62" y1="92.7" x2="207.62" y2="267.8"/><line x1="240.14" y1="92.7" x2="240.14" y2="267.8"/><line x1="272.66" y1="92.7" x2="272.66" y2="267.8"/><line x1="305.18" y1="92.7" x2="305.18" y2="267.8"/><line x1="337.70" y1="92.7" x2="337.70" y2="267.8"/><line x1="12.5" y1="92.70" x2="337.7" y2="92.70"/><line x1="12.5" y1="114.59" x2="337.7" y2="114.59"/><line x1="12.5" y1="136.48" x2="337.7" y2="136.48"/><line x1="12.5" y1="158.36" x2="337.7" y2="158.36"/><line x1="12.5" y1="180.25" x2="337.7" y2="180.25"/><line x1="12.5" y1="202.14" x2="337.7" y2="202.14"/><line x1="12.5" y1="224.03" x2="337.7" y2="224.03"/><line x1="12.5" y1="245.91" x2="337.7" y2="245.91"/><line x1="12.5" y1="267.80" x2="337.7" y2="267.80"/></g>
<polyline points="12.5,179.81 14.0,180.67 15.5,180.57 17.0,179.96 18.5,180.24 20.0,180.19 21.5,180.43 23.0,180.60 24.5,179.76 26.0,179.68 27.5,180.65 29.0,180.17 30.5,180.56 32.0,179.65 33.5,180.18 35.0,180.52 36.5,179.92 38.0,180.78 39.5,180.73 41.0,179.69 42.5,179.68 44.0,180.30 45.5,180.78 47.0,180.11 48.5,179.91 50.0,180.16 51.5,179.68 53.0,179.92 54.5,180.18 56.0,180.24 57.5,179.93 59.0,179.93 60.5,179.91 62.0,180.20 63.5,180.00 65.0,179.68 66.5,180.66 68.0,180.32 69.5,180.42 71.0,179.87 72.5,180.84 74.0,180.68 75.5,179.80 77.0,180.05 78.5,180.52 80.0,180.50 81.5,180.77 83.0,180.16 84.5,180.65 86.0,180.45 87.5,180.01 89.0,180.36 90.5,180.71 92.0,180.67 93.5,180.26 95.0,180.36 96.5,179.69 98.0,179.94 99.5,180.61 101.0,180.15 102.5,179.86 104.0,180.31 105.5,180.49 107.0,180.46 108.5,180.10 110.0,180.18 111.5,180.26 113.0,180.58 114.5,180.28 116.0,180.12 117.5,180.24 119.0,179.69 120.5,179.70 122.0,180.49 123.5,180.83 125.0,180.36 126.5,180.12 128.0,179.85 129.5,180.25 131.0,180.83 132.5,180.57 134.0,180.30 135.5,180.68 137.0,179.93 138.5,180.27 140.0,180.79 141.5,180.34 143.0,180.20 144.5,179.97 146.0,180.31 147.5,180.80 149.0,179.66 150.5,180.59 152.0,180.63 153.5,180.71 155.0,180.54 156.5,180.62 158.0,180.27 159.5,180.32 161.0,180.16 162.5,179.72 164.0,180.69 165.5,180.33 167.0,179.89 168.5,180.26 170.0,180.23 171.5,180.08 173.0,180.07 174.5,180.30 176.0,180.40 177.5,180.38 179.0,180.20 180.5,179.68 182.0,179.93 183.5,179.86 185.0,180.35 186.5,180.68 188.0,180.61 189.5,180.61 191.0,180.63 192.5,179.96 194.0,180.66 195.5,180.46 197.0,179.75 198.5,179.67 200.0,179.67 201.5,180.56 203.0,179.95 204.5,179.78 206.0,180.40 207.5,180.06 209.0,179.73 210.5,179.84 212.0,180.28 213.5,179.85 215.0,179.98 216.5,180.50 218.0,180.20 219.5,180.04 221.0,180.22 222.5,179.68 224.0,180.11 225.5,180.16 227.0,179.88 228.5,179.78 230.0,180.73 231.5,180.26 233.0,179.90 234.5,180.38 236.0,180.63 237.5,179.67 239.0,179.67 240.5,179.83 242.0,180.51 243.5,179.84 245.0,180.50 246.5,180.46 248.0,180.30 249.5,179.91 251.0,180.82 252.5,180.61 254.0,180.27 255.5,179.92 257.0,180.43 258.5,180.12 260.0,180.34 261.5,180.04 263.0,180.41 264.5,179.72 266.0,180.01 267.5,180.81 269.0,180.70 270.5,180.02 272.0,180.68 273.5,180.02 275.0,180.78 276.5,180.54 278.0,180.15 279.5,179.95 281.0,179.66 282.5,180.70 284.0,179.70 285.5,180.63 287.0,180.80 288.5,180.33 290.0,179.86 291.5,180.69 293.0,180.82 294.5,180.49 296.0,180.26 297.5,180.10 299.0,180.07 300.5,179.90 302.0,180.46 303.5,180.17 305.0,179.88 306.5,179.78 308.0,180.45 309.5,180.01 311.0,180.25 312.5,180.04 314.0,180.70 315.5,180.73 317.0,179.67 318.5,179.89 320.0,180.04 321.5,180.83 323.0,180.59 324.5,180.06 326.0,179.91 327.5,180.46 329.0,180.66 330.5,180.77 332.0,180.06 333.5,180.71 335.0,180.47 336.5,180.23" fill="none" stroke="#1e78ff" stroke-width="1.1"/>
<polyline points="12.5,180.71 14.0,180.70 15.5,179.81 17.0,179.83 18.5,180.59 20.0,180.49 21.5,180.42 23.0,180.06 24.5,180.36 26.0,180.36 27.5,180.33 29.0,179.91 30.5,180.18 32.0,180.14 33.5,180.47 35.0,180.74 36.5,180.70 38.0,180.29 39.5,180.19 41.0,180.02 42.5,179.79 44.0,179.78 45.5,180.21 47.0,180.07 48.5,180.13 50.0,180.64 51.5,180.28 53.0,180.31 54.5,179.99 56.0,179.77 57.5,180.08 59.0,179.89 60.5,180.26 62.0,180.75 63.5,180.42 65.0,179.93 66.5,180.64 68.0,180.55 69.5,180.48 71.0,180.66 72.5,180.51 74.0,180.54 75.5,180.10 77.0,180.73 78.5,180.71 80.0,179.91 81.5,180.50 83.0,180.47 84.5,180.21 86.0,180.28 87.5,180.24 89.0,180.67 90.5,180.25 92.0,180.58 93.5,180.10 95.0,180.63 96.5,180.65 98.0,180.21 99.5,180.32 101.0,180.67 102.5,180.47 104.0,180.24 105.5,179.97 107.0,180.07 108.5,180.45 110.0,179.92 111.5,180.66 113.0,180.02 114.5,180.66 116.0,180.06 117.5,180.71 119.0,180.46 120.5,180.25 122.0,180.27 123.5,180.40 125.0,180.34 126.5,180.06 128.0,179.96 129.5,180.26 131.0,180.68 132.5,180.37 134.0,179.83 135.5,180.57 137.0,180.48 138.5,180.66 140.0,179.94 141.5,180.49 143.0,179.81 144.5,180.40 146.0,180.02 147.5,179.98 149.0,180.63 150.5,179.86 152.0,180.27 153.5,180.60 155.0,179.99 156.5,179.96 158.0,180.63 159.5,180.17 161.0,180.47 162.5,179.78 164.0,180.11 165.5,179.92 167.0,180.42 168.5,179.83 170.0,180.70 171.5,179.78 173.0,180.48 174.5,179.77 176.0,180.01 177.5,180.56 179.0,179.91 180.5,179.93 182.0,180.44 183.5,180.14 185.0,179.79 186.5,180.74 188.0,179.90 189.5,179.79 191.0,180.09 192.5,180.37 194.0,180.49 195.5,179.86 197.0,180.09 198.5,179.78 200.0,180.20 201.5,180.52 203.0,180.49 204.5,180.65 206.0,180.51 207.5,180.61 209.0,180.46 210.5,180.22 212.0,179.98 213.5,180.41 215.0,180.07 216.5,179.85 218.0,180.20 219.5,180.62 221.0,179.88 222.5,180.33 224.0,180.14 225.5,180.26 227.0,179.89 228.5,180.71 230.0,180.01 231.5,180.36 233.0,180.17 234.5,179.77 236.0,180.31 237.5,179.89 239.0,179.81 240.5,179.78 242.0,179.91 243.5,179.85 245.0,180.39 246.5,180.26 248.0,180.73 249.5,180.68 251.0,180.74 252.5,179.98 254.0,180.19 255.5,180.00 257.0,180.34 258.5,180.37 260.0,180.55 261.5,180.46 263.0,180.01 264.5,180.17 266.0,180.28 267.5,179.75 269.0,179.79 270.5,180.16 272.0,179.86 273.5,180.47 275.0,179.99 276.5,179.85 278.0,179.93 279.5,179.98 281.0,179.97 282.5,180.27 284.0,180.21 285.5,180.06 287.0,180.39 288.5,179.96 290.0,180.66 291.5,180.71 293.0,180.48 294.5,180.18 296.0,180.26 297.5,180.33 299.0,179.80 300.5,180.17 302.0,180.28 303.5,179.93 305.0,179.84 306.5,180.55 308.0,180.12 309.5,180.27 311.0,180.67 312.5,180.36 314.0,180.04 315.5,180.73 317.0,180.12 318.5,179.77 320.0,180.44 321.5,179.85 323.0,180.06 324.5,180.59 326.0,180.42 327.5,179.77 329.0,180.20 330.5,180.16 332.0,180.24 333.5,179.96 335.0,180.34 336.5,179.82" fill="none" stroke="#00e0f0" stroke-width="1.1"/>
<polyline points="12.5,180.07 14.0,180.28 15.5,180.16 17.0,180.32 18.5,180.34 20.0,179.95 21.5,179.91 23.0,180.49 24.5,180.08 26.0,180.06 27.5,180.60 29.0,180.23 30.5,180.49 32.0,180.23 33.5,180.35 35.0,180.01 36.5,180.34 38.0,180.51 39.5,180.27 41.0,180.42 42.5,180.37 44.0,179.94 45.5,180.43 47.0,180.31 48.5,180.11 50.0,179.92 51.5,180.51 53.0,180.23 54.5,180.40 56.0,180.52 57.5,180.40 59.0,180.54 60.5,180.18 62.0,180.46 63.5,180.21 65.0,180.55 66.5,180.52 68.0,179.97 69.5,180.00 71.0,180.05 72.5,180.58 74.0,180.21 75.5,180.34 77.0,180.11 78.5,180.26 80.0,180.17 81.5,180.15 83.0,180.31 84.5,180.31 86.0,180.53 87.5,180.38 89.0,180.55 90.5,180.50 92.0,180.59 93.5,180.37 95.0,180.01 96.5,180.50 98.0,180.58 99.5,180.53 101.0,180.30 102.5,180.40 104.0,180.05 105.5,180.48 107.0,180.30 108.5,180.10 110.0,179.94 111.5,180.50 113.0,180.59 114.5,179.96 116.0,180.46 117.5,180.19 119.0,180.01 120.5,180.11 122.0,180.44 123.5,180.51 125.0,179.93 126.5,180.33 128.0,179.93 129.5,180.40 131.0,180.13 132.5,180.52 134.0,180.59 135.5,180.25 137.0,180.60 138.5,180.12 140.0,179.95 141.5,180.32 143.0,179.92 144.5,180.04 146.0,180.19 147.5,180.33 149.0,180.01 150.5,179.93 152.0,180.51 153.5,180.12 155.0,180.57 156.5,180.53 158.0,180.16 159.5,180.22 161.0,180.26 162.5,180.35 164.0,180.32 165.5,180.29 167.0,180.33 168.5,180.56 170.0,180.25 171.5,180.20 173.0,180.40 174.5,180.07 176.0,180.11 177.5,180.58 179.0,180.26 180.5,180.28 182.0,179.91 183.5,180.19 185.0,180.31 186.5,179.91 188.0,180.33 189.5,180.34 191.0,179.94 192.5,180.34 194.0,180.23 195.5,180.38 197.0,180.15 198.5,180.39 200.0,180.42 201.5,179.92 203.0,179.94 204.5,180.37 206.0,180.57 207.5,180.08 209.0,180.22 210.5,180.31 212.0,180.12 213.5,180.15 215.0,180.12 216.5,180.16 218.0,180.32 219.5,180.11 221.0,180.16 222.5,180.44 224.0,179.92 225.5,180.30 227.0,180.41 228.5,180.12 230.0,180.06 231.5,180.46 233.0,180.07 234.5,180.03 236.0,180.20 237.5,180.39 239.0,179.97 240.5,180.13 242.0,180.13 243.5,180.48 245.0,180.21 246.5,180.50 248.0,180.02 249.5,180.14 251.0,180.36 252.5,180.52 254.0,180.22 255.5,180.06 257.0,179.98 258.5,180.27 260.0,180.03 261.5,180.46 263.0,180.49 264.5,180.03 266.0,180.10 267.5,180.47 269.0,180.35 270.5,180.46 272.0,180.14 273.5,179.99 275.0,180.10 276.5,180.46 278.0,180.09 279.5,180.14 281.0,180.19 282.5,180.19 284.0,180.19 285.5,180.54 287.0,180.01 288.5,179.90 290.0,180.56 291.5,180.52 293.0,180.59 294.5,180.20 296.0,180.57 297.5,180.55 299.0,180.06 300.5,180.42 302.0,180.49 303.5,180.36 305.0,180.26 306.5,180.10 308.0,180.14 309.5,180.06 311.0,179.95 312.5,180.31 314.0,180.10 315.5,180.47 317.0,179.93 318.5,180.53 320.0,180.39 321.5,180.55 323.0,180.53 324.5,180.53 326.0,180.30 327.5,179.91 329.0,180.42 330.5,180.02 332.0,180.11 333.5,180.36 335.0,180.27 336.5,180.19" fill="none" stroke="#00e000" stroke-width="1.3"/>
<polyline points="12.5,180.25 13.5,176.87 14.5,173.49 15.5,170.12 16.5,166.77 17.5,163.44 18.5,160.13 19.5,156.86 20.5,153.61 21.5,150.41 22.5,147.25 23.5,144.15 24.5,141.09 25.5,138.10 26.5,135.16 27.5,132.30 28.5,129.50 29.5,126.79 30.5,124.15 31.5,121.59 32.5,119.13 33.5,116.75 34.5,114.47 35.5,112.29 36.5,110.20 37.5,108.23 38.5,106.36 39.5,104.60 40.5,102.95 41.5,101.42 42.5,100.01 43.5,98.72 44.5,97.55 45.5,96.50 46.5,95.57 47.5,94.78 48.5,94.11 49.5,93.57 50.5,93.16 51.5,92.88 52.5,92.73 53.5,92.71 54.5,92.82 55.5,93.06 56.5,93.43 57.5,93.93 58.5,94.56 59.5,95.32 60.5,96.21 61.5,97.22 62.5,98.35 63.5,99.61 64.5,100.99 65.5,102.48 66.5,104.09 67.5,105.82 68.5,107.66 69.5,109.60 70.5,111.65 71.5,113.80 72.5,116.05 73.5,118.40 74.5,120.84 75.5,123.37 76.5,125.99 77.5,128.68 78.5,131.45 79.5,134.30 80.5,137.21 81.5,140.19 82.5,143.22 83.5,146.32 84.5,149.46 85.5,152.65 86.5,155.88 87.5,159.15 88.5,162.44 89.5,165.77 90.5,169.12 91.5,172.48 92.5,175.85 93.5,179.24 94.5,182.62 95.5,186.00 96.5,189.37 97.5,192.72 98.5,196.06 99.5,199.38 100.5,202.66 101.5,205.92 102.5,209.13 103.5,212.30 104.5,215.43 105.5,218.50 106.5,221.51 107.5,224.46 108.5,227.35 109.5,230.17 110.5,232.91 111.5,235.57 112.5,238.15 113.5,240.64 114.5,243.05 115.5,245.36 116.5,247.57 117.5,249.68 118.5,251.69 119.5,253.59 120.5,255.38 121.5,257.06 122.5,258.63 123.5,260.08 124.5,261.41 125.5,262.62 126.5,263.70 127.5,264.66 128.5,265.50 129.5,266.20 130.5,266.78 131.5,267.23 132.5,267.55 133.5,267.74 134.5,267.80 135.5,267.73 136.5,267.53 137.5,267.19 138.5,266.73 139.5,266.14 140.5,265.42 141.5,264.57 142.5,263.60 143.5,262.50 144.5,261.28 145.5,259.94 146.5,258.48 147.5,256.90 148.5,255.21 149.5,253.41 150.5,251.49 151.5,249.48 152.5,247.35 153.5,245.13 154.5,242.81 155.5,240.40 156.5,237.90 157.5,235.31 158.5,232.64 159.5,229.89 160.5,227.06 161.5,224.17 162.5,221.21 163.5,218.19 164.5,215.12 165.5,211.99 166.5,208.81 167.5,205.59 168.5,202.34 169.5,199.05 170.5,195.73 171.5,192.39 172.5,189.03 173.5,185.66 174.5,182.28 175.5,178.90 176.5,175.52 177.5,172.14 178.5,168.78 179.5,165.44 180.5,162.11 181.5,158.82 182.5,155.55 183.5,152.33 184.5,149.14 185.5,146.01 186.5,142.92 187.5,139.89 188.5,136.92 189.5,134.01 190.5,131.17 191.5,128.41 192.5,125.72 193.5,123.11 194.5,120.59 195.5,118.16 196.5,115.83 197.5,113.58 198.5,111.44 199.5,109.40 200.5,107.47 201.5,105.64 202.5,103.93 203.5,102.33 204.5,100.84 205.5,99.48 206.5,98.23 207.5,97.11 208.5,96.11 209.5,95.24 210.5,94.50 211.5,93.88 212.5,93.39 213.5,93.03 214.5,92.80 215.5,92.70 216.5,92.74 217.5,92.90 218.5,93.19 219.5,93.62 220.5,94.17 221.5,94.85 222.5,95.66 223.5,96.60 224.5,97.66 225.5,98.84 226.5,100.15 227.5,101.57 228.5,103.11 229.5,104.77 230.5,106.54 231.5,108.42 232.5,110.41 233.5,112.50 234.5,114.69 235.5,116.98 236.5,119.37 237.5,121.84 238.5,124.41 239.5,127.05 240.5,129.78 241.5,132.58 242.5,135.45 243.5,138.39 244.5,141.39 245.5,144.45 246.5,147.57 247.5,150.73 248.5,153.94 249.5,157.18 250.5,160.46 251.5,163.77 252.5,167.11 253.5,170.46 254.5,173.83 255.5,177.21 256.5,180.59 257.5,183.97 258.5,187.35 259.5,190.71 260.5,194.06 261.5,197.39 262.5,200.70 263.5,203.97 264.5,207.21 265.5,210.41 266.5,213.56 267.5,216.66 268.5,219.71 269.5,222.70 270.5,225.63 271.5,228.49 272.5,231.27 273.5,233.98 274.5,236.61 275.5,239.16 276.5,241.62 277.5,243.98 278.5,246.25 279.5,248.43 280.5,250.50 281.5,252.46 282.5,254.32 283.5,256.07 284.5,257.71 285.5,259.22 286.5,260.62 287.5,261.91 288.5,263.06 289.5,264.10 290.5,265.01 291.5,265.79 292.5,266.45 293.5,266.98 294.5,267.38 295.5,267.64 296.5,267.78 297.5,267.79 298.5,267.66 299.5,267.41 300.5,267.02 301.5,266.51 302.5,265.87 303.5,265.09 304.5,264.20 305.5,263.17 306.5,262.03 307.5,260.76 308.5,259.37 309.5,257.86 310.5,256.24 311.5,254.50 312.5,252.66 313.5,250.70 314.5,248.64 315.5,246.48 316.5,244.21 317.5,241.86 318.5,239.41 319.5,236.87 320.5,234.25 321.5,231.55 322.5,228.77 323.5,225.92 324.5,223.00 325.5,220.01 326.5,216.97 327.5,213.87 328.5,210.72 329.5,207.53 330.5,204.30 331.5,201.03 332.5,197.72 333.5,194.40 334.5,191.05 335.5,187.68 336.5,184.31 337.5,180.93" fill="none" stroke="#ee1010" stroke-width="1.5"/>
<path d="M44.8,180.2 L47.0,114.6 L48.3,114.6 Q49.45,165.8 50.6,180.2" fill="none" stroke="#f0c800" stroke-width="1.6" stroke-linejoin="round"/>
<path d="M47.5,180.2 L49.6,114.6 L50.4,114.6 Q51.93,165.8 55.5,180.2" fill="none" stroke="#1e78ff" stroke-width="1.3" stroke-linejoin="round"/>
<path d="M48.0,180.2 L50.0,114.6 L51.0,114.6 Q53.16,165.8 58.2,180.2" fill="none" stroke="#00e0f0" stroke-width="1.3" stroke-linejoin="round"/>
<path d="M49.2,180.2 L51.4,114.6 L52.3,114.6 Q53.65,165.8 56.8,180.2" fill="none" stroke="#00dc00" stroke-width="1.3" stroke-linejoin="round"/>
<path d="M126.0,180.2 L128.2,245.9 L129.3,245.9 Q130.65,194.7 132.0,180.2" fill="none" stroke="#f0c800" stroke-width="1.6" stroke-linejoin="round"/>
<path d="M129.0,180.2 L132.3,243.4 L133.2,243.4 Q134.40,194.1 137.2,180.2" fill="none" stroke="#1e78ff" stroke-width="1.3" stroke-linejoin="round"/>
<path d="M131.5,180.2 L134.4,236.9 L135.2,236.9 Q136.10,192.7 138.2,180.2" fill="none" stroke="#00dc00" stroke-width="1.3" stroke-linejoin="round"/>
<polyline points="134.3,180.2 134.8,196.2 136,190.2 139,180.2" fill="none" stroke="#00e0f0" stroke-width="1.3" stroke-linejoin="round"/>
<path d="M207.3,180.2 L209.9,114.6 L211.0,114.6 Q211.90,165.8 212.8,180.2" fill="none" stroke="#f0c800" stroke-width="1.6" stroke-linejoin="round"/>
<path d="M210.5,180.2 L212.9,117.1 L213.8,117.1 Q216.11,166.4 221.5,180.2" fill="none" stroke="#00e0f0" stroke-width="1.3" stroke-linejoin="round"/>
<path d="M211.0,180.2 L213.4,118.1 L214.2,118.1 Q216.63,166.6 222.3,180.2" fill="none" stroke="#1e78ff" stroke-width="1.3" stroke-linejoin="round"/>
<path d="M213.2,180.2 L215.6,123.6 L216.3,123.6 Q217.41,167.8 220.0,180.2" fill="none" stroke="#00dc00" stroke-width="1.3" stroke-linejoin="round"/>
<polyline points="285.6,180.2 286.3,197.2 287.2,180.2" fill="none" stroke="#00e0f0" stroke-width="1.3" stroke-linejoin="round"/>
<path d="M288.1,180.2 L291.2,245.9 L292.0,245.9 Q293.60,194.7 295.2,180.2" fill="none" stroke="#f0c800" stroke-width="1.6" stroke-linejoin="round"/>
<path d="M290.4,180.2 L294.8,242.9 L295.6,242.9 Q296.86,194.0 299.8,180.2" fill="none" stroke="#1e78ff" stroke-width="1.3" stroke-linejoin="round"/>
<path d="M292.0,180.2 L297.4,237.9 L298.0,237.9 Q298.78,192.9 300.6,180.2" fill="none" stroke="#00dc00" stroke-width="1.3" stroke-linejoin="round"/>
<polyline points="303,180.2 297.5,225.2 296,235.2" fill="none" stroke="#00e0f0" stroke-width="1.3" stroke-linejoin="round"/>
<rect x="12" y="82" width="26.5" height="9.5" fill="#d8d8d8"/>
<text x="14.3" y="89.8" font-size="8.8" fill="#161628" font-weight="bold" font-style="italic" textLength="21.5" lengthAdjust="spacingAndGlyphs">Aitek</text>
<rect x="119.6" y="82.9" width="8.7" height="8.1" fill="#ff0000"/>
<text x="120.89999999999999" y="90.6" font-size="9" fill="#000" font-weight="bold" textLength="6" lengthAdjust="spacingAndGlyphs">√</text>
<rect x="129.1" y="82.9" width="13.9" height="8.1" fill="#d4d4d4"/>
<text x="130.9" y="90.4" font-size="8.4" fill="#101828" font-weight="bold" textLength="10.3" lengthAdjust="spacingAndGlyphs">U1</text>
<rect x="156.1" y="82.9" width="8.7" height="8.1" fill="#ffe000"/>
<text x="157.4" y="90.6" font-size="9" fill="#000" font-weight="bold" textLength="6" lengthAdjust="spacingAndGlyphs">√</text>
<rect x="165.6" y="82.9" width="13.2" height="8.1" fill="#d4d4d4"/>
<text x="167.4" y="90.4" font-size="8.4" fill="#101828" font-weight="bold" textLength="9.6" lengthAdjust="spacingAndGlyphs">I1</text>
<rect x="192.1" y="82.9" width="8.7" height="8.1" fill="#00e8f0"/>
<text x="193.4" y="90.6" font-size="9" fill="#000" font-weight="bold" textLength="6" lengthAdjust="spacingAndGlyphs">√</text>
<rect x="201.6" y="82.9" width="13.5" height="8.1" fill="#d4d4d4"/>
<text x="203.4" y="90.4" font-size="8.4" fill="#101828" font-weight="bold" textLength="9.9" lengthAdjust="spacingAndGlyphs">I2</text>
<rect x="228.2" y="82.9" width="8.7" height="8.1" fill="#1e88ff"/>
<text x="229.5" y="90.6" font-size="9" fill="#000" font-weight="bold" textLength="6" lengthAdjust="spacingAndGlyphs">√</text>
<rect x="237.7" y="82.9" width="13.0" height="8.1" fill="#d4d4d4"/>
<text x="239.5" y="90.4" font-size="8.4" fill="#101828" font-weight="bold" textLength="9.4" lengthAdjust="spacingAndGlyphs">I3</text>
<rect x="264" y="82.9" width="8.7" height="8.1" fill="#00e000"/>
<text x="265.3" y="90.6" font-size="9" fill="#000" font-weight="bold" textLength="6" lengthAdjust="spacingAndGlyphs">√</text>
<rect x="273.5" y="82.9" width="12.0" height="8.1" fill="#d4d4d4"/>
<text x="275.3" y="90.4" font-size="8.4" fill="#101828" font-weight="bold" textLength="8.4" lengthAdjust="spacingAndGlyphs">I4</text>
<rect x="300.3" y="82.9" width="8.7" height="8.1" fill="#108888"/>
<text x="301.6" y="90.6" font-size="9" fill="#000" font-weight="bold" textLength="6" lengthAdjust="spacingAndGlyphs">√</text>
<rect x="309.8" y="82.9" width="17.6" height="8.1" fill="#d4d4d4"/>
<text x="311.6" y="90.4" font-size="8.4" fill="#101828" font-weight="bold" textLength="14.000000000000002" lengthAdjust="spacingAndGlyphs">ALL</text>
<rect x="12" y="269.9" width="29.0" height="7.8" fill="#d4d4d4"/>
<text x="12.8" y="277.0" font-size="8.6" fill="#101828" font-weight="bold" textLength="27.4" lengthAdjust="spacingAndGlyphs">SEC/DIV</text>
<text x="45" y="277.0" font-size="8.6" fill="#d0d0d0" font-weight="bold" textLength="25.4" lengthAdjust="spacingAndGlyphs">3.33ms</text>
<rect x="92.2" y="269.9" width="32.6" height="7.8" fill="#d4d4d4"/>
<text x="93" y="277.0" font-size="8.6" fill="#101828" font-weight="bold" textLength="31" lengthAdjust="spacingAndGlyphs">U-Range</text>
<text x="126.7" y="277.0" font-size="8.6" fill="#ff1a1a" font-weight="bold" textLength="4.4" lengthAdjust="spacingAndGlyphs">3</text>
<rect x="157.8" y="269.9" width="30.7" height="7.8" fill="#d4d4d4"/>
<text x="158.6" y="277.0" font-size="8.6" fill="#101828" font-weight="bold" textLength="29" lengthAdjust="spacingAndGlyphs">I-Range</text>
<text x="192" y="277.0" font-size="8.6" fill="#f0c800" font-weight="bold" textLength="4.2" lengthAdjust="spacingAndGlyphs">2</text>
<text x="204.8" y="277.0" font-size="8.6" fill="#00e0f0" font-weight="bold" textLength="4.2" lengthAdjust="spacingAndGlyphs">3</text>
<text x="218.4" y="277.0" font-size="8.6" fill="#1e78ff" font-weight="bold" textLength="4.2" lengthAdjust="spacingAndGlyphs">2</text>
<text x="231.5" y="277.0" font-size="8.6" fill="#00dc00" font-weight="bold" textLength="4.2" lengthAdjust="spacingAndGlyphs">1</text>
<rect x="256" y="269.9" width="25.0" height="7.8" fill="#d4d4d4"/>
<text x="256.8" y="277.0" font-size="8.6" fill="#101828" font-weight="bold" textLength="23.4" lengthAdjust="spacingAndGlyphs">Status</text>
<text x="283.4" y="277.0" font-size="8.6" fill="#d0d0d0" font-weight="bold" textLength="34.6" lengthAdjust="spacingAndGlyphs">I Overflow</text>
<rect x="349.2" y="82.8" width="40.1" height="9.1" fill="#d4d4d4"/>
<text x="351.5" y="90.6" font-size="8.7" fill="#101828" font-weight="bold" textLength="35.5" lengthAdjust="spacingAndGlyphs">Measure</text>
<line x1="349.5" y1="92.6" x2="676" y2="92.6" stroke="#8c8c8c" stroke-width="1"/>
<text x="350.2" y="100.2" font-size="6.4" fill="#c8c8c8" textLength="5.5" lengthAdjust="spacingAndGlyphs">I1</text>
<text x="452" y="98.9" font-size="6.4" fill="#c8c8c8" textLength="21" lengthAdjust="spacingAndGlyphs">i THD-F</text>
<text x="556" y="98.9" font-size="6.4" fill="#c8c8c8" textLength="18.5" lengthAdjust="spacingAndGlyphs">iPhase</text>
<text x="383" y="106.3" font-size="12.8" fill="#f0c800" stroke="#f0c800" stroke-width="0.12" textLength="48.9" lengthAdjust="spacingAndGlyphs">0.0171 A</text>
<text x="486" y="106.3" font-size="12.8" fill="#f0c800" stroke="#f0c800" stroke-width="0.12" textLength="53.9" lengthAdjust="spacingAndGlyphs">203.11 %</text>
<text x="589" y="106.3" font-size="12.8" fill="#f0c800" stroke="#f0c800" stroke-width="0.12" textLength="48.8" lengthAdjust="spacingAndGlyphs">9.99 deg</text>
<line x1="349.5" y1="112.1" x2="662" y2="112.2" stroke="#a4a4a4" stroke-width="1.1" stroke-dasharray="1.4 2.16"/>
<text x="349.8" y="118.6" font-size="6.4" fill="#c8c8c8" textLength="17.6" lengthAdjust="spacingAndGlyphs">Power</text>
<text x="452" y="118.6" font-size="6.4" fill="#c8c8c8" textLength="8" lengthAdjust="spacingAndGlyphs">PF</text>
<text x="556" y="118.6" font-size="6.4" fill="#c8c8c8" textLength="8" lengthAdjust="spacingAndGlyphs">VA</text>
<text x="383" y="125.5" font-size="12.8" fill="#f0c800" stroke="#f0c800" stroke-width="0.12" textLength="52.9" lengthAdjust="spacingAndGlyphs">0.8203 W</text>
<text x="486" y="125.5" font-size="12.8" fill="#f0c800" stroke="#f0c800" stroke-width="0.12" textLength="30.9" lengthAdjust="spacingAndGlyphs">0.434</text>
<text x="589" y="125.5" font-size="12.8" fill="#f0c800" stroke="#f0c800" stroke-width="0.12" textLength="56.6" lengthAdjust="spacingAndGlyphs">1.8888 VA</text>
<line x1="349.5" y1="131.5" x2="676" y2="131.5" stroke="#8c8c8c" stroke-width="1"/>
<rect x="663.2" y="94.1" width="12.3" height="34.7" fill="#ffd400"/>
<text transform="translate(666.2,97.2) rotate(90)" font-size="7.6" fill="#202020" textLength="19.6" lengthAdjust="spacingAndGlyphs">Cha 1</text>
<text x="350.2" y="139.1" font-size="6.4" fill="#c8c8c8" textLength="5.5" lengthAdjust="spacingAndGlyphs">I2</text>
<text x="452" y="137.8" font-size="6.4" fill="#c8c8c8" textLength="21" lengthAdjust="spacingAndGlyphs">i THD-F</text>
<text x="556" y="137.8" font-size="6.4" fill="#c8c8c8" textLength="18.5" lengthAdjust="spacingAndGlyphs">iPhase</text>
<text x="383" y="145.2" font-size="12.8" fill="#00e0f0" stroke="#00e0f0" stroke-width="0.12" textLength="48.9" lengthAdjust="spacingAndGlyphs">0.0044 A</text>
<text x="486" y="145.2" font-size="12.8" fill="#00e0f0" stroke="#00e0f0" stroke-width="0.12" textLength="53.9" lengthAdjust="spacingAndGlyphs">194.62 %</text>
<text x="589" y="145.2" font-size="12.8" fill="#00e0f0" stroke="#00e0f0" stroke-width="0.12" textLength="48.8" lengthAdjust="spacingAndGlyphs">2.23 deg</text>
<line x1="349.5" y1="151.0" x2="662" y2="151.1" stroke="#a4a4a4" stroke-width="1.1" stroke-dasharray="1.4 2.16"/>
<text x="349.8" y="157.5" font-size="6.4" fill="#c8c8c8" textLength="17.6" lengthAdjust="spacingAndGlyphs">Power</text>
<text x="452" y="157.5" font-size="6.4" fill="#c8c8c8" textLength="8" lengthAdjust="spacingAndGlyphs">PF</text>
<text x="556" y="157.5" font-size="6.4" fill="#c8c8c8" textLength="8" lengthAdjust="spacingAndGlyphs">VA</text>
<text x="383" y="164.4" font-size="12.8" fill="#00e0f0" stroke="#00e0f0" stroke-width="0.12" textLength="52.9" lengthAdjust="spacingAndGlyphs">0.2159 W</text>
<text x="486" y="164.4" font-size="12.8" fill="#00e0f0" stroke="#00e0f0" stroke-width="0.12" textLength="30.9" lengthAdjust="spacingAndGlyphs">0.445</text>
<text x="589" y="164.4" font-size="12.8" fill="#00e0f0" stroke="#00e0f0" stroke-width="0.12" textLength="49.8" lengthAdjust="spacingAndGlyphs">0.485 VA</text>
<line x1="349.5" y1="170.4" x2="676" y2="170.4" stroke="#8c8c8c" stroke-width="1"/>
<rect x="663.2" y="133.0" width="12.3" height="34.7" fill="#00e4ff"/>
<text transform="translate(666.2,136.1) rotate(90)" font-size="7.6" fill="#202020" textLength="19.6" lengthAdjust="spacingAndGlyphs">Cha 2</text>
<text x="350.2" y="178.0" font-size="6.4" fill="#c8c8c8" textLength="5.5" lengthAdjust="spacingAndGlyphs">I3</text>
<text x="452" y="176.7" font-size="6.4" fill="#c8c8c8" textLength="21" lengthAdjust="spacingAndGlyphs">i THD-F</text>
<text x="556" y="176.7" font-size="6.4" fill="#c8c8c8" textLength="18.5" lengthAdjust="spacingAndGlyphs">iPhase</text>
<text x="383" y="184.1" font-size="12.8" fill="#1e78ff" stroke="#1e78ff" stroke-width="0.12" textLength="48.9" lengthAdjust="spacingAndGlyphs">0.0162 A</text>
<text x="486" y="184.1" font-size="12.8" fill="#1e78ff" stroke="#1e78ff" stroke-width="0.12" textLength="53.9" lengthAdjust="spacingAndGlyphs">262.77 %</text>
<text x="589" y="184.1" font-size="12.8" fill="#1e78ff" stroke="#1e78ff" stroke-width="0.12" textLength="55.5" lengthAdjust="spacingAndGlyphs">4.783 deg</text>
<line x1="349.5" y1="189.9" x2="662" y2="190.0" stroke="#a4a4a4" stroke-width="1.1" stroke-dasharray="1.4 2.16"/>
<text x="349.8" y="196.4" font-size="6.4" fill="#c8c8c8" textLength="17.6" lengthAdjust="spacingAndGlyphs">Power</text>
<text x="452" y="196.4" font-size="6.4" fill="#c8c8c8" textLength="8" lengthAdjust="spacingAndGlyphs">PF</text>
<text x="556" y="196.4" font-size="6.4" fill="#c8c8c8" textLength="8" lengthAdjust="spacingAndGlyphs">VA</text>
<text x="383" y="203.3" font-size="12.8" fill="#1e78ff" stroke="#1e78ff" stroke-width="0.12" textLength="52.9" lengthAdjust="spacingAndGlyphs">0.6325 W</text>
<text x="486" y="203.3" font-size="12.8" fill="#1e78ff" stroke="#1e78ff" stroke-width="0.12" textLength="30.9" lengthAdjust="spacingAndGlyphs">0.355</text>
<text x="589" y="203.3" font-size="12.8" fill="#1e78ff" stroke="#1e78ff" stroke-width="0.12" textLength="49.8" lengthAdjust="spacingAndGlyphs">1.783 VA</text>
<line x1="349.5" y1="209.3" x2="676" y2="209.3" stroke="#8c8c8c" stroke-width="1"/>
<rect x="663.2" y="171.9" width="12.3" height="34.7" fill="#1a7cff"/>
<text transform="translate(666.2,175.0) rotate(90)" font-size="7.6" fill="#202020" textLength="19.6" lengthAdjust="spacingAndGlyphs">Cha 3</text>
<text x="350.2" y="216.9" font-size="6.4" fill="#c8c8c8" textLength="5.5" lengthAdjust="spacingAndGlyphs">I4</text>
<text x="452" y="215.6" font-size="6.4" fill="#c8c8c8" textLength="21" lengthAdjust="spacingAndGlyphs">i THD-F</text>
<text x="556" y="215.6" font-size="6.4" fill="#c8c8c8" textLength="18.5" lengthAdjust="spacingAndGlyphs">iPhase</text>
<text x="383" y="223.0" font-size="12.8" fill="#00dc00" stroke="#00dc00" stroke-width="0.12" textLength="48.9" lengthAdjust="spacingAndGlyphs">0.0023 A</text>
<text x="486" y="223.0" font-size="12.8" fill="#00dc00" stroke="#00dc00" stroke-width="0.12" textLength="53.9" lengthAdjust="spacingAndGlyphs">312.93 %</text>
<text x="589" y="223.0" font-size="12.8" fill="#00dc00" stroke="#00dc00" stroke-width="0.12" textLength="55.5" lengthAdjust="spacingAndGlyphs">0.579 deg</text>
<line x1="349.5" y1="228.8" x2="662" y2="228.9" stroke="#a4a4a4" stroke-width="1.1" stroke-dasharray="1.4 2.16"/>
<text x="349.8" y="235.3" font-size="6.4" fill="#c8c8c8" textLength="17.6" lengthAdjust="spacingAndGlyphs">Power</text>
<text x="452" y="235.3" font-size="6.4" fill="#c8c8c8" textLength="8" lengthAdjust="spacingAndGlyphs">PF</text>
<text x="556" y="235.3" font-size="6.4" fill="#c8c8c8" textLength="8" lengthAdjust="spacingAndGlyphs">VA</text>
<text x="383" y="242.2" font-size="12.8" fill="#00dc00" stroke="#00dc00" stroke-width="0.12" textLength="52.9" lengthAdjust="spacingAndGlyphs">0.0768 W</text>
<text x="486" y="242.2" font-size="12.8" fill="#00dc00" stroke="#00dc00" stroke-width="0.12" textLength="30.9" lengthAdjust="spacingAndGlyphs">0.304</text>
<text x="589" y="242.2" font-size="12.8" fill="#00dc00" stroke="#00dc00" stroke-width="0.12" textLength="49.8" lengthAdjust="spacingAndGlyphs">0.252 VA</text>
<line x1="349.5" y1="248.2" x2="676" y2="248.2" stroke="#8c8c8c" stroke-width="1"/>
<rect x="663.2" y="210.8" width="12.3" height="34.7" fill="#00e400"/>
<text transform="translate(666.2,213.9) rotate(90)" font-size="7.6" fill="#202020" textLength="19.6" lengthAdjust="spacingAndGlyphs">Cha 4</text>
<text x="350" y="256.2" font-size="6.4" fill="#c8c8c8" textLength="24" lengthAdjust="spacingAndGlyphs">Voltage</text>
<text x="452" y="256.2" font-size="6.4" fill="#c8c8c8" textLength="21" lengthAdjust="spacingAndGlyphs">u THD-F</text>
<text x="556" y="256.2" font-size="6.4" fill="#c8c8c8" textLength="32" lengthAdjust="spacingAndGlyphs">Frequency</text>
<text x="383" y="263.8" font-size="12.8" fill="#ff1a1a" stroke="#ff1a1a" stroke-width="0.12" textLength="45.4" lengthAdjust="spacingAndGlyphs">110.28V</text>
<text x="486" y="263.8" font-size="12.8" fill="#ff1a1a" stroke="#ff1a1a" stroke-width="0.12" textLength="29.7" lengthAdjust="spacingAndGlyphs">0.3%</text>
<text x="589" y="263.8" font-size="12.8" fill="#ff1a1a" stroke="#ff1a1a" stroke-width="0.12" textLength="53.0" lengthAdjust="spacingAndGlyphs">59.996HZ</text>
<line x1="349.5" y1="268.2" x2="676" y2="268.2" stroke="#8c8c8c" stroke-width="1"/>
<rect x="663.3" y="250" width="12.5" height="15.3" fill="#108888"/>
<text transform="translate(666.6,257.6) rotate(90)" text-anchor="middle" font-size="7.2" fill="#202020" textLength="11" lengthAdjust="spacingAndGlyphs">Vol</text>
<rect x="350.6" y="270.1" width="46.4" height="7.1" fill="#d4d4d4"/>
<text x="351.5" y="276.9" font-size="8.3" fill="#101828" font-weight="bold" textLength="44" lengthAdjust="spacingAndGlyphs">Digital Filter</text>
<text x="402" y="276.9" font-size="8.3" fill="#e0e0e0" font-weight="bold" textLength="4.2" lengthAdjust="spacingAndGlyphs">0</text>
<rect x="447.3" y="270.1" width="12.7" height="7.1" fill="#d4d4d4"/>
<text x="448.4" y="276.9" font-size="8.3" fill="#101828" font-weight="bold" textLength="10.4" lengthAdjust="spacingAndGlyphs">PT</text>
<text x="467.6" y="276.9" font-size="8.3" fill="#e0e0e0" font-weight="bold" textLength="10.6" lengthAdjust="spacingAndGlyphs">0.0</text>
<rect x="512" y="270.1" width="13.7" height="7.1" fill="#d4d4d4"/>
<text x="513" y="276.9" font-size="8.3" fill="#101828" font-weight="bold" textLength="11" lengthAdjust="spacingAndGlyphs">CT</text>
<text x="532.8" y="276.9" font-size="8.3" fill="#e0e0e0" font-weight="bold" textLength="10.4" lengthAdjust="spacingAndGlyphs">0.0</text>
<rect x="578" y="270.1" width="36.0" height="7.1" fill="#d4d4d4"/>
<text x="579" y="276.9" font-size="8.3" fill="#101828" font-weight="bold" textLength="34" lengthAdjust="spacingAndGlyphs">StopTime</text>
<text x="617.8" y="276.9" font-size="8.3" fill="#e0e0e0" font-weight="bold" textLength="4.2" lengthAdjust="spacingAndGlyphs">0</text>
<g stroke="#9c9c9c" stroke-width="1" stroke-dasharray="1.3 2.26"><line x1="12" y1="298.7" x2="665.5" y2="298.7"/><line x1="12" y1="315.6" x2="665.5" y2="315.6"/><line x1="12" y1="332.5" x2="665.5" y2="332.5"/><line x1="12" y1="349.3" x2="665.5" y2="349.3"/><line x1="12" y1="366.2" x2="665.5" y2="366.2"/><line x1="12" y1="383.1" x2="665.5" y2="383.1"/><line x1="12" y1="400.0" x2="665.5" y2="400.0"/><line x1="12" y1="416.9" x2="665.5" y2="416.9"/><line x1="12" y1="433.7" x2="665.5" y2="433.7"/><line x1="12" y1="450.6" x2="665.5" y2="450.6"/></g>
<line x1="12" y1="467.6" x2="666" y2="467.6" stroke="#d0d0d0" stroke-width="1.1"/>
<line x1="13.5" y1="467.6" x2="13.5" y2="470.5" stroke="#c8c8c8" stroke-width="0.8"/>
<text x="13.5" y="477.2" font-size="7.2" fill="#c0c0c0" text-anchor="middle">0</text>
<line x1="78.1" y1="467.6" x2="78.1" y2="470.5" stroke="#c8c8c8" stroke-width="0.8"/>
<text x="78.1" y="477.2" font-size="7.2" fill="#c0c0c0" text-anchor="middle">5</text>
<line x1="142.7" y1="467.6" x2="142.7" y2="470.5" stroke="#c8c8c8" stroke-width="0.8"/>
<text x="142.7" y="477.2" font-size="7.2" fill="#c0c0c0" text-anchor="middle">10</text>
<line x1="207.3" y1="467.6" x2="207.3" y2="470.5" stroke="#c8c8c8" stroke-width="0.8"/>
<text x="207.3" y="477.2" font-size="7.2" fill="#c0c0c0" text-anchor="middle">15</text>
<line x1="271.9" y1="467.6" x2="271.9" y2="470.5" stroke="#c8c8c8" stroke-width="0.8"/>
<text x="271.9" y="477.2" font-size="7.2" fill="#c0c0c0" text-anchor="middle">20</text>
<line x1="336.5" y1="467.6" x2="336.5" y2="470.5" stroke="#c8c8c8" stroke-width="0.8"/>
<text x="336.5" y="477.2" font-size="7.2" fill="#c0c0c0" text-anchor="middle">25</text>
<line x1="401.1" y1="467.6" x2="401.1" y2="470.5" stroke="#c8c8c8" stroke-width="0.8"/>
<text x="401.1" y="477.2" font-size="7.2" fill="#c0c0c0" text-anchor="middle">30</text>
<line x1="465.7" y1="467.6" x2="465.7" y2="470.5" stroke="#c8c8c8" stroke-width="0.8"/>
<text x="465.7" y="477.2" font-size="7.2" fill="#c0c0c0" text-anchor="middle">35</text>
<line x1="530.3" y1="467.6" x2="530.3" y2="470.5" stroke="#c8c8c8" stroke-width="0.8"/>
<text x="530.3" y="477.2" font-size="7.2" fill="#c0c0c0" text-anchor="middle">40</text>
<line x1="594.9" y1="467.6" x2="594.9" y2="470.5" stroke="#c8c8c8" stroke-width="0.8"/>
<text x="594.9" y="477.2" font-size="7.2" fill="#c0c0c0" text-anchor="middle">45</text>
<line x1="659.5" y1="467.6" x2="659.5" y2="470.5" stroke="#c8c8c8" stroke-width="0.8"/>
<text x="659.5" y="477.2" font-size="7.2" fill="#c0c0c0" text-anchor="middle">50</text>
<text x="12.5" y="297.2" font-size="6.8" fill="#c0c0c0" textLength="17" lengthAdjust="spacingAndGlyphs">100%</text>
<rect x="23.3" y="299" width="2.6" height="168.5" fill="#ff0000"/>
<rect x="161" y="290" width="6.5" height="7" fill="#ff0000"/>
<text x="161.9" y="296.6" font-size="7" fill="#000" font-weight="bold" textLength="5" lengthAdjust="spacingAndGlyphs">√</text>
<rect x="169.5" y="289.6" width="28" height="8" fill="#dcdcdc"/>
<text x="170" y="296.3" font-size="7" fill="#101010" textLength="27" lengthAdjust="spacingAndGlyphs">U1 Wave</text>
<rect x="211.3" y="290" width="6.5" height="7" fill="#ff0000"/>
<text x="219.9" y="296.3" font-size="7" fill="#d4d4d4" textLength="29" lengthAdjust="spacingAndGlyphs">U1 Report</text>
<rect x="261" y="290" width="6.5" height="7" fill="#f0c800"/>
<text x="269.6" y="296.3" font-size="7" fill="#d4d4d4" textLength="25.5" lengthAdjust="spacingAndGlyphs">I1 Wave</text>
<rect x="311.7" y="290" width="6.5" height="7" fill="#f0c800"/>
<text x="320.3" y="296.3" font-size="7" fill="#d4d4d4" textLength="29" lengthAdjust="spacingAndGlyphs">I1 Report</text>
<rect x="360.4" y="290" width="6.5" height="7" fill="#00e0f0"/>
<text x="369.0" y="296.3" font-size="7" fill="#d4d4d4" textLength="25.5" lengthAdjust="spacingAndGlyphs">I2 Wave</text>
<rect x="410.3" y="290" width="6.5" height="7" fill="#00e0f0"/>
<text x="418.90000000000003" y="296.3" font-size="7" fill="#d4d4d4" textLength="29" lengthAdjust="spacingAndGlyphs">I2 Report</text>
<rect x="460.4" y="290" width="6.5" height="7" fill="#1e78ff"/>
<text x="469.0" y="296.3" font-size="7" fill="#d4d4d4" textLength="25.5" lengthAdjust="spacingAndGlyphs">I3 Wave</text>
<rect x="510.3" y="290" width="6.5" height="7" fill="#1e78ff"/>
<text x="518.9" y="296.3" font-size="7" fill="#d4d4d4" textLength="29" lengthAdjust="spacingAndGlyphs">I3 Report</text>
<rect x="559.6" y="290" width="6.5" height="7" fill="#00dc00"/>
<text x="568.2" y="296.3" font-size="7" fill="#d4d4d4" textLength="25.5" lengthAdjust="spacingAndGlyphs">I4 Wave</text>
<rect x="609.4" y="290" width="6.5" height="7" fill="#00dc00"/>
<text x="618.0" y="296.3" font-size="7" fill="#d4d4d4" textLength="29" lengthAdjust="spacingAndGlyphs">I4 Report</text>
<rect x="1" y="491" width="688" height="20" fill="url(#gStatus)"/>
<line x1="6" y1="506.5" x2="685" y2="506.5" stroke="#dadada" stroke-width="1"/>
<line x1="1" y1="510.5" x2="689" y2="510.5" stroke="#8a8a8a" stroke-width="1"/>
<text x="7.7" y="502" font-size="8" fill="#222222" textLength="43.8" lengthAdjust="spacingAndGlyphs" stroke="#222222" stroke-width="0.05">请求同步数据</text>
<line x1="64.3" y1="491.5" x2="64.3" y2="508" stroke="#a8a8a8" stroke-width="0.9"/>
<line x1="65.3" y1="491.5" x2="65.3" y2="508" stroke="#ececec" stroke-width="0.9"/>
<line x1="136.7" y1="491.5" x2="136.7" y2="508" stroke="#a8a8a8" stroke-width="0.9"/>
<line x1="137.7" y1="491.5" x2="137.7" y2="508" stroke="#ececec" stroke-width="0.9"/>
<line x1="269.3" y1="491.5" x2="269.3" y2="508" stroke="#a8a8a8" stroke-width="0.9"/>
<line x1="270.3" y1="491.5" x2="270.3" y2="508" stroke="#ececec" stroke-width="0.9"/>
<line x1="421.3" y1="491.5" x2="421.3" y2="508" stroke="#a8a8a8" stroke-width="0.9"/>
<line x1="422.3" y1="491.5" x2="422.3" y2="508" stroke="#ececec" stroke-width="0.9"/>
<rect x="69.3" y="496.6" width="64.4" height="6.8" rx="3.2" fill="url(#gProg)" stroke="#4a5868" stroke-width="0.8"/>
<text x="141" y="501.8" font-size="7" fill="#202020" textLength="90.3" lengthAdjust="spacingAndGlyphs">Test Time: 2017/8/31 16:58:00</text>
<text x="424.8" y="501.8" font-size="7" fill="#202020" textLength="92" lengthAdjust="spacingAndGlyphs">Timestamp:1243.80004882813</text>
<rect x="684" y="500" width="1.5" height="1.5" fill="#f4f4f4"/><rect x="684.8" y="500.8" width="1" height="1" fill="#8a8a8a"/>
<rect x="681" y="503" width="1.5" height="1.5" fill="#f4f4f4"/><rect x="681.8" y="503.8" width="1" height="1" fill="#8a8a8a"/>
<rect x="684" y="503" width="1.5" height="1.5" fill="#f4f4f4"/><rect x="684.8" y="503.8" width="1" height="1" fill="#8a8a8a"/>
<rect x="678" y="506" width="1.5" height="1.5" fill="#f4f4f4"/><rect x="678.8" y="506.8" width="1" height="1" fill="#8a8a8a"/>
<rect x="681" y="506" width="1.5" height="1.5" fill="#f4f4f4"/><rect x="681.8" y="506.8" width="1" height="1" fill="#8a8a8a"/>
<rect x="684" y="506" width="1.5" height="1.5" fill="#f4f4f4"/><rect x="684.8" y="506.8" width="1" height="1" fill="#8a8a8a"/>
</svg></body></html>
